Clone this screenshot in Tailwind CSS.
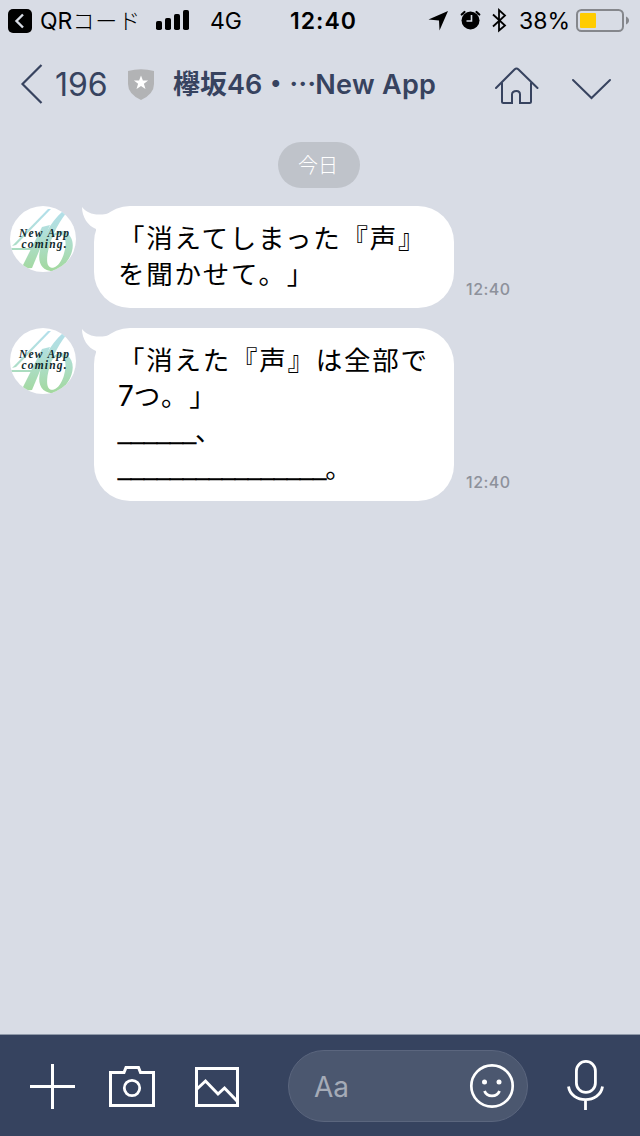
<!DOCTYPE html>
<html lang="ja">
<head>
<meta charset="utf-8">
<meta name="viewport" content="width=640">
<title>Chat</title>
<script src="https://cdn.jsdelivr.net/npm/@tailwindcss/browser@4"></script>
</head>
<body class="w-[640px] h-[1136px] overflow-hidden flex flex-col bg-[#d8dce5] font-['Inter','Noto_Sans_CJK_JP',sans-serif] text-black [text-spacing-trim:space-all]">

<svg class="absolute w-0 h-0" aria-hidden="true">
  <defs>
    <linearGradient id="logo" x1="0" y1="0" x2="0" y2="66" gradientUnits="userSpaceOnUse">
      <stop offset="0" stop-color="#b3dfee"/><stop offset=".45" stop-color="#b0dfd5"/><stop offset="1" stop-color="#a2d89c"/>
    </linearGradient>
    <clipPath id="round"><circle cx="33" cy="33" r="33"/></clipPath>
    <symbol id="avatar" viewBox="0 0 66 66">
      <circle cx="33" cy="33" r="33" fill="#fff"/>
      <g clip-path="url(#round)" fill="url(#logo)">
        <path d="M38 3L41 3L6 39L2 40Z"/>
        <path d="M0 42H29V44H0Z"/>
        <path d="M32 21L40 19L22 62L11 63Z"/>
        <path d="M53 5L57 6C46 20 40 34 37.500 48C36.500 56 37 62 43 62L43 65C32 65 28 57 29.500 47C31 34 40 16 53 5Z"/>
        <path d="M37 38C41 27 50 22 57 27C65 33 64 45 58 54C53 62 47 66 40 65L41 62C47 62 51 56 53.500 49C56 41 57 32 52 29C46 27 41 31 37 41Z"/>
      </g>
    </symbol>
  </defs>
</svg>

<header class="flex h-10 shrink-0 items-center text-[23px] leading-10 pt-0.5">
  <svg class="ml-2 w-6 h-6 shrink-0" viewBox="0 0 24 24"><rect width="24" height="24" rx="5" fill="#000"/><path d="M15 5.500L8.500 12l6.500 6.500" fill="none" stroke="#d8dce5" stroke-width="2.400"/></svg>
  <span class="ml-2 w-[116px] shrink-0 whitespace-nowrap text-[23px]">QR<span class="font-light text-[22px] tracking-[0.9px]">コード</span></span>
  <svg class="w-[34px] h-5 shrink-0 -mt-0.5" viewBox="0 0 34 20"><rect y="11" width="6" height="9" rx="1.800"/><rect x="9" y="8" width="6" height="12" rx="1.800"/><rect x="18" y="4" width="6" height="16" rx="1.800"/><rect x="27" width="6" height="20" rx="1.800"/></svg>
  <span class="ml-5 w-[80px] shrink-0">4G</span>
  <span class="w-[137px] shrink-0 font-semibold tracking-[1px]">12:40</span>
  <svg class="w-[92px] h-10 shrink-0 -mt-0.5" viewBox="427 0 92 40"><path d="M448 11L428.500 19.500L439 20.500L439.500 30.500Z"/><circle cx="470.500" cy="20.500" r="9"/><path d="M461.700 14.500L464.500 12M476.500 12L479.300 14.500" stroke="#000" stroke-width="2.200" stroke-linecap="round"/><path d="M471.500 15V21H466.500" fill="none" stroke="#d8dce5" stroke-width="1.600"/><path d="M493 14.500L505 25.500L499 30.500V10L505 15.500L493 26.500" fill="none" stroke="#000" stroke-width="1.800"/></svg>
  <span class="w-[57px] shrink-0 whitespace-nowrap">38%</span>
  <svg class="w-[54px] h-10 shrink-0 -mt-0.5" viewBox="576 0 54 40"><rect x="577" y="10" width="46" height="21" rx="4.500" fill="none" stroke="#85878c" stroke-width="2"/><rect x="580" y="13" width="16" height="15" rx="1" fill="#fc0"/><path d="M626 16.500c4 1.500 4 6.500 0 8z" fill="#85878c"/></svg>
</header>

<nav class="flex h-[88px] shrink-0 items-center text-[#37435f]">
  <svg class="ml-5 w-[23px] h-10 mt-[-1px] shrink-0" viewBox="20 64 23 40"><path d="M41.500 65L22.500 84L41.500 103" fill="none" stroke="currentColor" stroke-width="2.200"/></svg>
  <span class="ml-3 w-[73px] text-[32px] pt-0.5">196</span>
  <svg class="w-[26px] h-[31px] shrink-0" viewBox="0 0 26 31"><path d="M0 2Q13-1.500 26 2V15Q26 25 13 31Q0 25 0 15Z" fill="#b2b3b5"/><path d="M13 6.500l1.900 5h5.200l-4.200 3.300 1.600 5.200-4.500-3.100-4.500 3.100 1.600-5.200-4.200-3.300h5.200z" fill="#fff"/></svg>
  <h1 class="ml-[19px] w-[322px] flex items-center whitespace-nowrap text-[27px] font-semibold pt-0.5"><span class="font-bold">欅坂</span>46<span class="w-[27px] text-center">・</span><span class="w-[26px] text-center">⋯</span><span class="tracking-[0.3px]">New App</span></h1>
  <svg class="w-[44px] h-10 shrink-0 mt-1" viewBox="495 66 44 40"><path d="M496 88L514.500 69.500Q516.500 67.500 518.500 69.500L537.500 88M502 83V101.500Q502 103 503.500 103H512V94.500Q512 91 516.500 91Q520 91 520 94.500V103H529.500Q531 103 531 101.500V83" fill="none" stroke="currentColor" stroke-width="2" stroke-linecap="round"/></svg>
  <svg class="ml-8 w-[41px] h-6 mt-2.5 shrink-0" viewBox="571 77 41 24"><path d="M573 80L591.500 98L610 80" fill="none" stroke="currentColor" stroke-width="2" stroke-linecap="round"/></svg>
</nav>

<main class="flex flex-1 flex-col pt-[14px]">
  <div class="ml-[278px] flex h-[46px] w-[82px] items-center justify-center rounded-full bg-[#bfc3ca] text-[20px] font-light text-white pr-[2px] pt-[1px]">今日</div>

  <section class="mt-[18px] flex">
    <svg class="ml-[10px] w-[66px] h-[66px] shrink-0" viewBox="0 0 66 66"><use href="#avatar"/><text font-family="Liberation Serif" font-weight="700" font-style="italic" font-size="11.500" fill="#10292c"><tspan x="9" y="31" textLength="50">New App</tspan><tspan x="11.500" y="41.500" textLength="45">coming.</tspan></text></svg>
    <svg class="ml-[6px] w-[30px] h-[26px] -mr-[18px] shrink-0" viewBox="82 206 30 26"><path d="M82 207C87 213 94 216 106 214L112 212V232H96V229C88 226 82 217 82 207Z" fill="#fff"/></svg>
    <div class="h-[102px] w-[360px] rounded-[36px] bg-white pl-6 pt-[14px] whitespace-nowrap text-[26.500px] leading-9 tracking-[1.750px]">「消えてしまった『声』<br>を聞かせて。」</div>
    <time class="ml-[12px] self-end mb-[7px] text-[16px] font-medium leading-6 tracking-[0.5px] text-[#8d919b]">12:40</time>
  </section>

  <section class="mt-5 flex">
    <svg class="ml-[10px] w-[66px] h-[66px] shrink-0" viewBox="0 0 66 66"><use href="#avatar"/><text font-family="Liberation Serif" font-weight="700" font-style="italic" font-size="11.500" fill="#10292c"><tspan x="9" y="30" textLength="50">New App</tspan><tspan x="11.500" y="40.500" textLength="45">coming.</tspan></text></svg>
    <svg class="ml-[6px] w-[30px] h-[26px] -mr-[18px] shrink-0" viewBox="82 206 30 26"><path d="M82 207C87 213 94 216 106 214L112 212V232H96V229C88 226 82 217 82 207Z" fill="#fff"/></svg>
    <div class="h-[173px] w-[360px] rounded-[36px] bg-white pl-6 pt-[14px] whitespace-nowrap text-[26.500px] leading-9 tracking-[1.750px]">
      <div class="h-9">「消えた『声』は全部で</div>
      <div class="h-9"><span class="text-[28px] tracking-[0]">7</span>つ。」</div>
      <div class="flex h-9 leading-[34px]"><span class="font-['Liberation_Sans'] text-[23.400px] tracking-[0] [-webkit-text-stroke:0.6px]">______</span><span class="-ml-px">、</span></div>
      <div class="flex h-9 leading-[34px]"><span class="font-['Liberation_Sans'] text-[23.400px] tracking-[0] [-webkit-text-stroke:0.6px]">________________</span><span class="-ml-px mt-px">。</span></div>
    </div>
    <time class="ml-[12px] self-end mb-[7px] text-[16px] font-medium leading-6 tracking-[0.5px] text-[#8d919b]">12:40</time>
  </section>
</main>

<footer class="flex h-[102px] shrink-0 items-center border-t border-[#8f99a9] bg-[#36435f] text-white">
  <svg class="w-[288px] h-[101px] shrink-0" viewBox="0 1035 288 101" fill="none" stroke="currentColor" stroke-width="3"><path d="M30 1086.500H75M52.500 1064V1109M110.500 1072.500H124L126 1067.500H138.500L140.500 1072.500H153.500V1105.500H110.500ZM196.500 1068.500H237.500V1105.500H196.500ZM197 1089L205.500 1081L218 1094L224.500 1088L237.500 1101.500"/><circle cx="132" cy="1088" r="7.700" stroke-width="2.800"/></svg>
  <div class="flex h-[72px] w-[240px] items-center rounded-full border border-[#5b667e] bg-[#4b576f] pl-[25px] pr-[12px]">
    <span class="flex-1 text-[28px] text-[#a5abb7] pt-0.5">Aa</span>
    <svg class="w-[46px] h-[46px]" viewBox="0 0 46 46"><circle cx="23" cy="23" r="20.700" fill="none" stroke="currentColor" stroke-width="2.700"/><circle cx="15.500" cy="19" r="2.500" fill="#fff"/><circle cx="30" cy="19" r="2.500" fill="#fff"/><path d="M15.500 28C18 34.500 28 34.500 30.500 28" fill="none" stroke="currentColor" stroke-width="2.800"/></svg>
  </div>
  <svg class="ml-[38px] w-[40px] h-[101px] shrink-0" viewBox="566 1035 40 101" fill="none" stroke="currentColor" stroke-width="2.800"><rect x="576.400" y="1061.400" width="19" height="31" rx="9.500"/><path d="M568.500 1086.500C571 1104 600 1104 602.500 1086.500M585.500 1099.500V1110"/></svg>
</footer>
</body>
</html>
